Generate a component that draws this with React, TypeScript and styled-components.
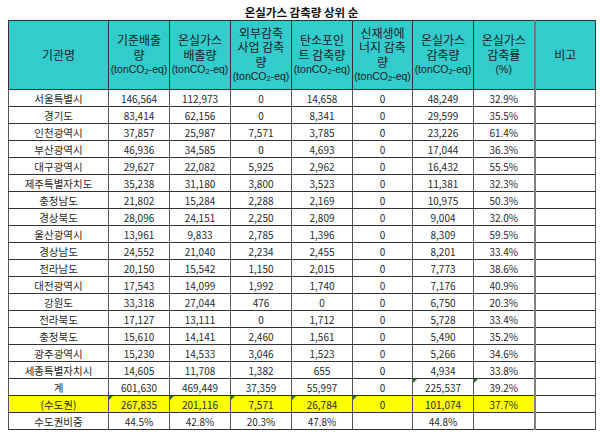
import React from "react";
import styled, { createGlobalStyle, css } from "styled-components";

const Global = createGlobalStyle`
  html, body { margin: 0; padding: 0; background: #ffffff; }
  body { font-family: "Noto Sans CJK KR", "Noto Sans", sans-serif; }
`;

const Page = styled.div`
  width: 600px;
  height: 439px;
  padding: 5px 0 0 8px;
  box-sizing: border-box;
`;

const Title = styled.div`
  width: 587px;
  height: 15px;
  line-height: 15px;
  text-align: center;
  font-size: 11.5px;
  font-weight: 700;
  color: #111;
`;

const Table = styled.table`
  border-collapse: collapse;
  table-layout: fixed;
  width: 587px;
`;

const HeadCell = styled.th<{ $last?: boolean }>`
  background: #33cccc;
  height: 68px;
  padding: 0;
  border: 1px solid #333;
  border-left-color: ${(p) => (p.$last ? "#777" : "#333")};
  border-left-width: ${(p) => (p.$last ? "2px" : "1px")};
  font-weight: 400;
  font-size: 12px;
  color: #1c1c1c;
  text-align: center;
  vertical-align: middle;
`;

const Line = styled.span`
  display: block;
  height: 14.5px;
  line-height: 14.5px;
  white-space: nowrap;
`;

const Unit = styled.span`
  display: block;
  height: 15px;
  line-height: 15px;
  font-family: "Liberation Sans", Arial, sans-serif;
  font-size: 10.5px;
  white-space: nowrap;
`;

const Sub = styled.span`
  font-size: 0.72em;
  vertical-align: -0.08em;
`;

const Row = styled.tr`
  height: 17px;
`;

const Cell = styled.td<{ $hl?: boolean; $mark?: boolean; $last?: boolean }>`
  position: relative;
  padding: 0;
  height: 16px;
  border-top: 1px solid #333;
  border-bottom: 1px solid #333;
  border-left: ${(p) => (p.$last ? "2px solid #808080" : "1px solid #555")};
  border-right: 1px solid #555;
  background: ${(p) => (p.$hl ? "#ffff00" : "#ffffff")};
  font-size: 10px;
  line-height: 15px;
  color: #2a2a2a;
  text-align: center;
  white-space: nowrap;
  overflow: hidden;
  ${(p) =>
    p.$mark &&
    css`
      &::before {
        content: "";
        position: absolute;
        left: 0;
        top: 0;
        border-top: 4px solid #1e7b1e;
        border-right: 4px solid transparent;
      }
    `}
`;

const NameCell = styled(Cell)`
  font-size: 10.5px;
`;

type Data = {
  name: string;
  vals: string[];
  hl?: boolean;
  marks?: number[];
};

const rows: Data[] = [
  { name: "서울특별시", vals: ["146,564", "112,973", "0", "14,658", "0", "48,249", "32.9%"] },
  { name: "경기도", vals: ["83,414", "62,156", "0", "8,341", "0", "29,599", "35.5%"] },
  { name: "인천광역시", vals: ["37,857", "25,987", "7,571", "3,785", "0", "23,226", "61.4%"] },
  { name: "부산광역시", vals: ["46,936", "34,585", "0", "4,693", "0", "17,044", "36.3%"] },
  { name: "대구광역시", vals: ["29,627", "22,082", "5,925", "2,962", "0", "16,432", "55.5%"] },
  { name: "제주특별자치도", vals: ["35,238", "31,180", "3,800", "3,523", "0", "11,381", "32.3%"] },
  { name: "충청남도", vals: ["21,802", "15,284", "2,288", "2,169", "0", "10,975", "50.3%"] },
  { name: "경상북도", vals: ["28,096", "24,151", "2,250", "2,809", "0", "9,004", "32.0%"] },
  { name: "울산광역시", vals: ["13,961", "9,833", "2,785", "1,396", "0", "8,309", "59.5%"] },
  { name: "경상남도", vals: ["24,552", "21,040", "2,234", "2,455", "0", "8,201", "33.4%"] },
  { name: "전라남도", vals: ["20,150", "15,542", "1,150", "2,015", "0", "7,773", "38.6%"] },
  { name: "대전광역시", vals: ["17,543", "14,099", "1,992", "1,740", "0", "7,176", "40.9%"] },
  { name: "강원도", vals: ["33,318", "27,044", "476", "0", "0", "6,750", "20.3%"] },
  { name: "전라북도", vals: ["17,127", "13,111", "0", "1,712", "0", "5,728", "33.4%"] },
  { name: "충청북도", vals: ["15,610", "14,141", "2,460", "1,561", "0", "5,490", "35.2%"] },
  { name: "광주광역시", vals: ["15,230", "14,533", "3,046", "1,523", "0", "5,266", "34.6%"] },
  { name: "세종특별자치시", vals: ["14,605", "11,708", "1,382", "655", "0", "4,934", "33.8%"] },
  { name: "계", vals: ["601,630", "469,449", "37,359", "55,997", "0", "225,537", "39.2%"], marks: [5, 6] },
  {
    name: "(수도권)",
    vals: ["267,835", "201,116", "7,571", "26,784", "0", "101,074", "37.7%"],
    hl: true,
    marks: [0, 1, 2, 3, 4],
  },
  { name: "수도권비중", vals: ["44.5%", "42.8%", "20.3%", "47.8%", "", "44.8%", ""] },
];

const widths = [100, 61, 61, 61, 61, 60, 61, 61, 61];

const T = "(tonCO";

type Head = { lines: string[]; unit?: "co2" | "pct" };

const headers: Head[] = [
  { lines: ["기관명"] },
  { lines: ["기준배출", "량"], unit: "co2" },
  { lines: ["온실가스", "배출량"], unit: "co2" },
  { lines: ["외부감축", "사업 감축", "량"], unit: "co2" },
  { lines: ["탄소포인", "트 감축량"], unit: "co2" },
  { lines: ["신재생에", "너지 감축", "량"], unit: "co2" },
  { lines: ["온실가스", "감축량"], unit: "co2" },
  { lines: ["온실가스", "감축률"], unit: "pct" },
  { lines: ["비고"] },
];

export default function App() {
  return (
    <Page>
      <Global />
      <Title>온실가스 감축량 상위 순</Title>
      <Table>
        <colgroup>
          {widths.map((w, i) => (
            <col key={i} style={{ width: w }} />
          ))}
        </colgroup>
        <thead>
          <tr>
            {headers.map((h, i) => (
              <HeadCell key={i} $last={i === 8}>
                {h.lines.map((l) => (
                  <Line key={l}>{l}</Line>
                ))}
                {h.unit === "co2" && (
                  <Unit>
                    {T}
                    <Sub>2</Sub>-eq)
                  </Unit>
                )}
                {h.unit === "pct" && <Unit>(%)</Unit>}
              </HeadCell>
            ))}
          </tr>
        </thead>
        <tbody>
          {rows.map((r) => (
            <Row key={r.name}>
              <NameCell $hl={r.hl}>{r.name}</NameCell>
              {r.vals.map((v, i) => (
                <Cell key={i} $hl={r.hl} $mark={r.marks?.includes(i)}>
                  {v}
                </Cell>
              ))}
              <Cell $last />
            </Row>
          ))}
        </tbody>
      </Table>
    </Page>
  );
}
